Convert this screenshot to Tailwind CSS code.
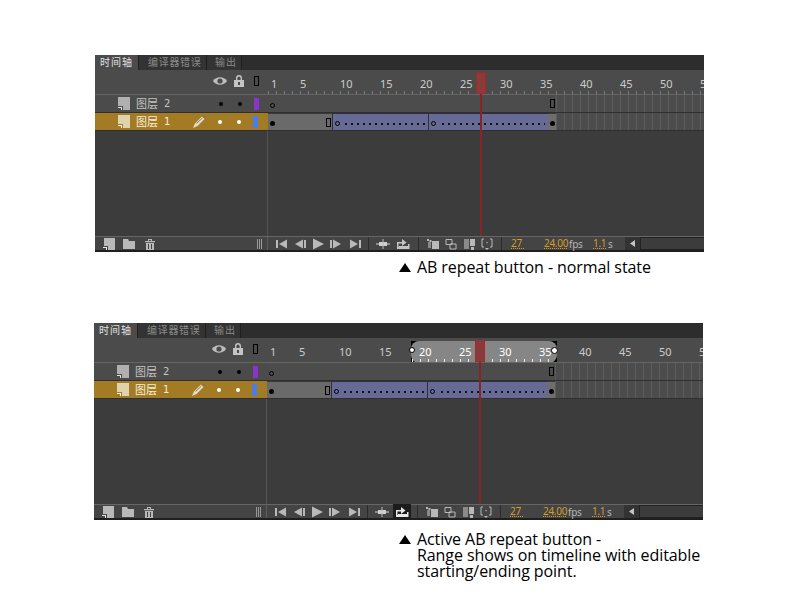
<!DOCTYPE html>
<html>
<head>
<meta charset="utf-8">
<script src="https://cdn.jsdelivr.net/npm/@tailwindcss/browser@4"></script>
</head>
<body class="bg-white w-[800px] h-[600px] overflow-hidden font-['Liberation_Sans',sans-serif]">
<div id="root" class="flex flex-col"></div>
<script>
const labels = ['5','10','15','20','25','30','35','40','45','50','5'];
const cjk = "font-['Noto_Sans_CJK_SC','Noto_Sans',sans-serif]";
function panel(active){
  const ruler = `<div class="relative flex-1 h-full overflow-hidden bg-[#4b4b4b]">
    ${active ? `<div class="absolute left-[144px] top-[3px] w-[146px] h-[22px] bg-black"><div class="w-full h-full rounded-[8px] bg-[#868686]"></div></div>
    <div class="absolute left-[145px] top-[21px] w-[144px] h-[3px] bg-[repeating-linear-gradient(90deg,#eeeeee_0,#eeeeee_1px,transparent_1px,transparent_8px)]"></div>` :
    `<div class="absolute left-0 right-0 top-[21px] h-[3px] bg-[repeating-linear-gradient(90deg,#7a7a7a_0,#7a7a7a_1px,transparent_1px,transparent_8px)]"></div>`}
    <div class="relative flex items-start pt-[8px] pl-[3px] text-[11px] leading-[12px] text-[#cccccc] font-['Noto_Sans',sans-serif]">
      <span class="w-[29px] shrink-0">1</span>${labels.map(l=>`<span class="w-[40px] shrink-0 ${active&&(l==='20'||l==='25'||l==='30'||l==='35')?'text-white':''}">${l}</span>`).join('')}
    </div>
    <div class="absolute left-[208px] top-[2px] w-[10px] h-[22px] bg-[#8a3a3b] border border-[#a32a2a]"></div>
    ${active ? `<div class="absolute left-[142px] top-[9px] w-[6px] h-[6px] rounded-full bg-white border border-black"></div>
    <div class="absolute left-[284px] top-[9px] w-[7px] h-[7px] rounded-full bg-white border border-black"></div>` : ''}
  </div>`;
  const icon = (w, inner, cls='') => `<svg class="shrink-0 ${cls}" width="${w}" height="12" viewBox="0 0 ${w} 12" fill="#b9b9b9">${inner}</svg>`;
  const layerIcon = (c1,c2) => `<svg class="shrink-0" width="13" height="13" viewBox="0 0 13 13"><path d="M1 0h12v13H6V9H1z" fill="${c1}"/><path d="M1 10h4v3H4v-2H1z" fill="${c2}"/></svg>`;
  const c = active ? '#e8e8e8' : '#c4c4c4';
  return `
  <div class="relative w-[609px] h-[197px] flex flex-col bg-[#3c3c3c] overflow-hidden">
    <div class="flex h-[15px] bg-[#2d2d2d] shrink-0 ${cjk} text-[10px] leading-[14px]">
      <div class="w-[43px] pl-[5px] bg-[#4b4b4b] text-[#e0e0e0] tracking-[1px]">时间轴</div>
      <div class="w-[68px] pl-[9px] bg-[#333333] border-l border-[#1f1f1f] text-[#8a8a8a] tracking-[0.7px]">编译器错误</div>
      <div class="w-[36px] pl-[8px] bg-[#333333] border-x border-[#1f1f1f] text-[#8a8a8a] tracking-[1px]">输出</div>
    </div>
    <div class="flex h-[25px] shrink-0 bg-[#4b4b4b] border-b border-[#666666]">
      <div class="relative w-[173px] shrink-0 flex items-center pb-[2px]">
        <svg class="ml-[118px]" width="14" height="10" viewBox="0 0 14 10"><path d="M0 5C3 0 11 0 14 5C11 10 3 10 0 5z" fill="#bdbdbd"/><circle cx="7" cy="5" r="2.6" fill="#4b4b4b"/></svg>
        <svg class="ml-[7px]" width="10" height="12" viewBox="0 0 10 12"><path d="M2 5V3a3 3 0 0 1 6 0v2H6.6V3a1.6 1.6 0 0 0-3.2 0v2z" fill="#c4c4c4"/><rect y="5" width="10" height="7" fill="#c4c4c4"/><rect x="4" y="7" width="2" height="3" fill="#4b4b4b"/></svg>
        <div class="ml-[10px] w-[5px] h-[10px] border border-black"></div>
      </div>
      ${ruler}
    </div>
    <div class="flex h-[18px] shrink-0 bg-[#4b4b4b] border-b border-[#2f2f2f]">
      <div class="w-[173px] shrink-0 flex items-center text-[#c4c4c4]">
        <div class="ml-[22px]">${layerIcon('#b0b0b0','#e0e0e0')}</div>
        <div class="ml-[6px] w-[36px] ${cjk} text-[11px] leading-none">图层</div><span class="w-[10px] -ml-[8px] text-[10px] leading-none font-['DejaVu_Sans',sans-serif]">2</span>
        <div class="ml-[45px] w-[4px] h-[4px] rounded-full bg-black"></div>
        <div class="ml-[15px] w-[4px] h-[4px] rounded-full bg-black"></div>
        <div class="ml-[12px] w-[5px] h-[12px] bg-[#8b35c8]"></div>
      </div>
      <div class="flex-1 flex h-full">
        <div class="w-[288px] shrink-0 flex items-center justify-between bg-[#4c4c4c] pl-[2px] pr-[1px]">
          <div class="w-[5px] h-[5px] rounded-full border border-black mt-[3px]"></div>
          <div class="w-[5px] h-[9px] border border-black"></div>
        </div>
        <div class="flex-1 bg-[repeating-linear-gradient(90deg,#5c5c5c_0,#5c5c5c_1px,#4c4c4c_1px,#4c4c4c_8px)]"></div>
      </div>
    </div>
    <div class="flex h-[18px] shrink-0 bg-[#a37b24] border-b border-[#2f2f2f]">
      <div class="w-[173px] shrink-0 flex items-center text-[#f6eeda]">
        <div class="ml-[22px]">${layerIcon('#e0d3ac','#fff6dd')}</div>
        <div class="ml-[6px] w-[36px] ${cjk} text-[11px] leading-none">图层</div><span class="w-[10px] -ml-[8px] text-[10px] leading-none font-['DejaVu_Sans',sans-serif]">1</span>
        <svg class="ml-[19px]" width="13" height="13" viewBox="0 0 13 13"><path d="M2 8.500L9 1.500l2.500 2.500-7 7L0 13z" fill="#e8dfc8"/><path d="M3.500 8.500L9.500 3" stroke="#8a7a55" stroke-width="1"/><path d="M9.500 1l1-1L13 2.500l-1 1z" fill="#8a7448"/></svg>
        <div class="ml-[12px] w-[4px] h-[4px] rounded-full bg-white"></div>
        <div class="ml-[15px] w-[4px] h-[4px] rounded-full bg-white"></div>
        <div class="ml-[12px] w-[5px] h-[12px] bg-[#4a7de6]"></div>
      </div>
      <div class="flex-1 flex h-full bg-[#4c4c4c]">
        <div class="w-[64px] shrink-0 flex items-center justify-between bg-[#6a6a6a] border-t border-[#3a3a3a] pl-[2px]">
          <div class="w-[5px] h-[5px] rounded-full bg-black mt-[3px]"></div>
          <div class="w-[5px] h-[9px] border border-black mr-[1px]"></div>
        </div>
        <div class="w-[96px] shrink-0 flex items-center bg-[#686a96] border-t border-l border-[#2e2e3e] pl-[2px]">
          <div class="w-[5px] h-[5px] rounded-full border border-black mt-[3px]"></div>
          <div class="ml-[5px] mt-[3px] flex-1 mr-[3px] h-[2px] bg-[repeating-linear-gradient(90deg,#111111_0,#111111_2px,transparent_2px,transparent_6px)]"></div>
        </div>
        <div class="w-[120px] shrink-0 flex items-center bg-[#686a96] border-t border-l border-[#2e2e3e] pl-[2px]">
          <div class="w-[5px] h-[5px] rounded-full border border-black mt-[3px]"></div>
          <div class="ml-[6px] mt-[3px] flex-1 mr-[3px] h-[2px] bg-[repeating-linear-gradient(90deg,#111111_0,#111111_2px,transparent_2px,transparent_6px)]"></div>
        </div>
        <div class="w-[8px] shrink-0 flex items-center justify-center bg-[#6e6e6e] border-t border-[#3a3a3a]">
          <div class="w-[5px] h-[5px] rounded-full bg-black mt-[3px]"></div>
        </div>
        <div class="flex-1 bg-[repeating-linear-gradient(90deg,#5c5c5c_0,#5c5c5c_1px,#4c4c4c_1px,#4c4c4c_8px)]"></div>
      </div>
    </div>
    <div class="flex flex-1">
      <div class="w-[173px] shrink-0 border-r border-[#555555]"></div>
    </div>
    <div class="flex items-center h-[16px] shrink-0 bg-[#444444] border-t border-[#666666] border-b-2 border-b-[#1f1f1f]">
      <div class="w-[173px] shrink-0 flex items-center border-r border-[#5c5c5c] h-full">
        <svg class="ml-[8px] shrink-0" width="12" height="12" viewBox="0 0 12 12"><path d="M1 0h11v12H5V8H1z" fill="#b9b9b9"/><path d="M0 9h4v3H3v-2H0z" fill="#e6e6e6"/></svg>
        ${icon(12,'<path d="M0 1h5l1 2h6v8H0z"/>','ml-[8px]')}
        ${icon(12,'<path d="M1 3h10v1.200H1zM4 1h4v2H7V2H5v1H4zM2 5h8v7H2zM4 6v5h1V6zM7 6v5h1V6z" fill-rule="evenodd"/>','ml-[9px]')}
        <div class="ml-[101px] w-[5px] h-[10px] border-x border-[#999999] flex justify-center"><div class="w-px h-full bg-[#999999]"></div></div>
      </div>
      <div class="flex items-center">
        ${icon(11,'<rect x="0" y="2" width="2" height="8"/><path d="M11 1.500v9L3 6z"/>','ml-[8px]')}
        ${icon(12,'<path d="M9 1.500v9L1 6z"/><rect x="10" y="2" width="2" height="8"/>','ml-[7px]')}
        ${icon(11,'<path d="M0 0.500L11 6 0 11.500z"/>','ml-[7px]')}
        ${icon(12,'<rect x="0" y="2" width="2" height="8"/><path d="M3 1.500v9L11 6z"/>','ml-[6px]')}
        ${icon(11,'<path d="M0 1.500v9L8 6z"/><rect x="9" y="2" width="2" height="8"/>','ml-[8px]')}
        <div class="ml-[7px] w-px h-[13px] bg-[#2b2b2b]"></div>
        ${icon(14,'<rect x="0" y="5" width="14" height="2" fill="#8f8f8f"/><rect x="3" y="4" width="8" height="4" fill="#d0d0d0"/><rect x="6.500" y="1" width="1" height="10"/>','ml-[7px]')}
        <div class="ml-[4px] w-[18px] h-[15px] flex items-center justify-center ${active?'bg-[#1c1c1c]':''}">
          <svg width="14" height="12" viewBox="0 0 14 12"><path d="M1 4h5V1l4.500 3.500L6 8V5.500H2.500V9H12V6h1.500v5H1z" fill="${c}"/><rect x="3" y="8" width="10" height="2" fill="${c}"/></svg>
        </div>
        <div class="ml-[6px] w-px h-[13px] bg-[#2b2b2b]"></div>
        ${icon(12,'<path d="M0 1h2v2H0zM2.500 2h2v2h-2zM5 3h7v8H5z"/><path d="M1 4h3v6H1z" opacity=".6"/>','ml-[8px]')}
        ${icon(12,'<path d="M1 1.500h6v5H1zM5 6h6v5H5z" fill="none" stroke="#b9b9b9"/>','ml-[6px]')}
        ${icon(11,'<rect x="0" y="1" width="5" height="10" opacity=".6"/><rect x="6" y="1" width="5" height="7"/><rect x="7" y="9" width="3" height="3"/>','ml-[7px]')}
        ${icon(12,'<path d="M3 1H1v8h2M9 1h2v8H9" fill="none" stroke="#b9b9b9"/><rect x="5.500" y="4" width="1.200" height="1.200"/><path d="M4 10h4l-2 2z"/>','ml-[6px]')}
        <div class="ml-[8px] w-px h-[13px] bg-[#2b2b2b]"></div>
        <div class="flex items-center text-[10px] leading-none text-[#d69c24] font-['Noto_Sans',sans-serif] tracking-[-0.3px]">
          <span class="ml-[9px] w-[13px] border-b border-dotted border-[#d69c24]">27</span>
          <span class="ml-[20px] w-[23px] border-b border-dotted border-[#d69c24]">24.00</span>
          <span class="ml-[2px] w-[14px] text-[#b5b5b5]">fps</span>
          <span class="ml-[10px] w-[13px] border-b border-dotted border-[#d69c24]">1.1</span>
          <span class="ml-[2px] w-[6px] text-[#b5b5b5]">s</span>
        </div>
        <div class="ml-[11px] w-[15px] h-[13px] flex items-center justify-center bg-[#333333]">
          <svg width="5" height="7" viewBox="0 0 5 7"><path d="M5 0v7L0 3.500z" fill="#c4c4c4"/></svg>
        </div>
        <div class="w-[70px] h-[13px] bg-[#3c3c3c] border border-[#222222] shrink-0"></div>
      </div>
    </div>
    <div class="absolute left-[385px] top-[39px] w-[2px] h-[142px] bg-[#862428]"></div>
  </div>`;
}
const caption = (lines) => `<div class="flex items-start text-[16px] leading-[16px] text-black font-['Open_Sans',sans-serif] tracking-[-0.08px]">
  <svg class="shrink-0 mt-[4px]" width="12" height="9" viewBox="0 0 12 9"><path d="M6 0L12 9H0z" fill="#000"/></svg>
  <div class="ml-[6px] whitespace-nowrap">${lines}</div></div>`;
document.getElementById('root').innerHTML = `
  <div class="ml-[95px] mt-[55px]">${panel(false)}</div>
  <div class="ml-[399px] mt-[7px] h-[64px]">${caption('AB repeat button - normal state')}</div>
  <div class="ml-[94px]">${panel(true)}</div>
  <div class="ml-[399px] mt-[11px]">${caption('Active AB repeat button -<br>Range shows on timeline with editable<br>starting/ending point.')}</div>`;
</script>
</body>
</html>
